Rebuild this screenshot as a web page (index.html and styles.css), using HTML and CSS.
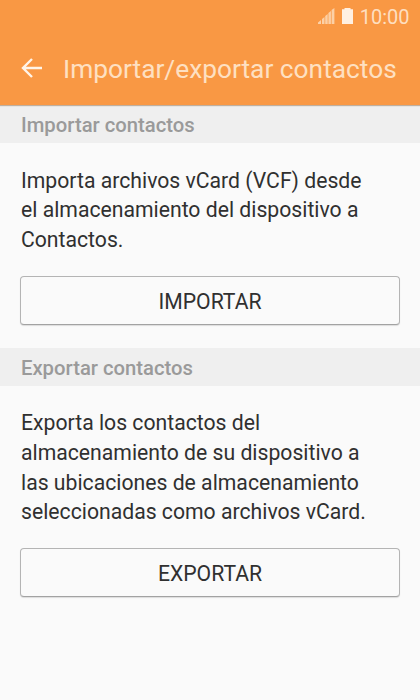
FILE: index.html
```html
<!DOCTYPE html>
<html lang="es">
<head>
<meta charset="utf-8">
<title>Importar/exportar contactos</title>
<meta name="viewport" content="width=device-width, initial-scale=1.0">
<link rel="stylesheet" href="styles.css">
</head>
<body>

<header class="top">
  <div class="status-bar">
    <svg class="signal" width="17" height="16" viewBox="0 0 17 16">
      <path d="M0 16v-1.5l3-2.5v4zM4 16v-5l2.5-2v7zM7.2 16V8l2.5-2v10zM10.4 16V5l2.5-2v13zM13.6 16V2l2.8-2v16z"/>
    </svg>
    <svg class="battery" width="11" height="16" viewBox="0 0 11 16">
      <path d="M2.5 0h6v1.2H11V16H0V1.2h2.5z"/>
    </svg>
    <span class="clock">10:00</span>
  </div>
  <div class="action-bar">
    <svg class="back" width="22" height="20" viewBox="0 0 22 20">
      <path d="M21 10H2M11 1L2 10l9 9"/>
    </svg>
    <h1>Importar/exportar contactos</h1>
  </div>
</header>

<main>
  <h2>Importar contactos</h2>
  <section>
    <p>Importa archivos vCard (VCF) desde<br>el almacenamiento del dispositivo a<br>Contactos.</p>
    <button type="button">IMPORTAR</button>
  </section>

  <h2>Exportar contactos</h2>
  <section>
    <p>Exporta los contactos del<br>almacenamiento de su dispositivo a<br>las ubicaciones de almacenamiento<br>seleccionadas como archivos vCard.</p>
    <button type="button">EXPORTAR</button>
  </section>
</main>

</body>
</html>
```
FILE: styles.css
```css
* {
  box-sizing: border-box;
}
body {
  margin: 0;
  min-height: 100vh;
  background-color: #fafafa;
  color: #303030;
  font-family: Roboto, "Liberation Sans", sans-serif;
}
.top {
  position: relative; /* keeps the shadow above the first heading */
  height: 105px;
  background-color: #f99844;
  box-shadow: 0 1px 1px rgba(120, 80, 40, 0.4);
}
.status-bar {
  display: flex;
  justify-content: flex-end;
  align-items: center;
  height: 31px;
  padding-right: 10.5px;
  color: #fedfc0;
}
.signal {
  fill: #fcd0a6;
}
.battery {
  margin: 0 7px;
  fill: #fff0e2;
}
.clock {
  padding-top: 2px;
  font-size: 20px;
}
.action-bar {
  display: flex;
  align-items: center;
  height: 74px;
  padding-left: 21px;
}
.back {
  fill: none;
  stroke: #fff4e8;
  stroke-width: 2.4;
}
h1 {
  margin: 0 0 0 20px;
  padding-top: 2px;
  color: #fee0c2;
  font-size: 26.3px;
  font-weight: 400;
  white-space: nowrap;
}
h2 {
  height: 38px;
  margin: 0;
  padding-left: 21px;
  background-color: #efefef;
  color: #9a9a9a;
  font-size: 20.25px;
  font-weight: 500;
  line-height: 40.5px;
}
section {
  padding: 22.5px 20px 23px;
}
p {
  margin: 0 0 20.8px 1px;
  font-size: 21.2px;
  line-height: 29.75px;
  white-space: nowrap;
}
button {
  display: block;
  width: 100%;
  height: 49px;
  padding: 2px 0 0;
  border: 1px solid #b4b4b4;
  border-bottom-color: #a2a2a2;
  border-radius: 4px;
  background-color: #fafafa;
  box-shadow: 0 1px 1px rgba(0, 0, 0, 0.12);
  color: #303030;
  font-family: inherit;
  font-size: 21.2px;
}
```
